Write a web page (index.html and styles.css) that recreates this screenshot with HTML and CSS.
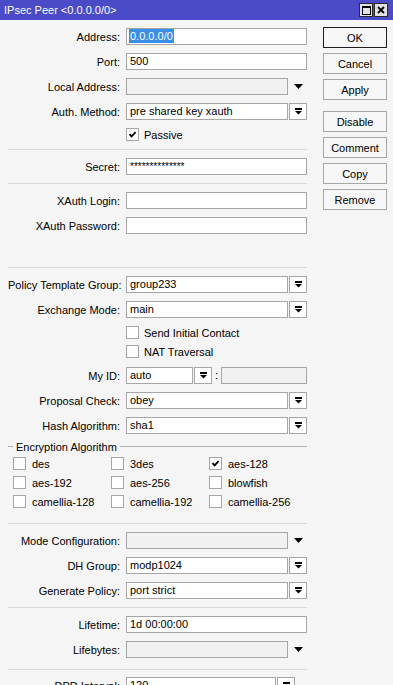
FILE: index.html
```html
<html>
<head>
<title>IPsec Peer</title>
<link rel="stylesheet" href="styles.css">
</head>
<body>
<div class="titlebar">
	<span class="title">IPsec Peer &lt;0.0.0.0/0&gt;</span>
	<div class="tb-buttons">
		<span class="tb-btn"><svg width="9" height="9" viewBox="0 0 9 9"><rect x="0.5" y="0.5" width="8" height="8" fill="none" stroke="#000"/><rect x="0" y="0" width="9" height="2"/></svg></span>
		<span class="tb-btn"><svg width="8" height="8" viewBox="0 0 8 8"><path d="M1 1L7 7M7 1L1 7" stroke="#000" stroke-width="1.8"/></svg></span>
	</div>
</div>
<div class="main">
	<div class="form">
		<div class="row"><span class="lbl">Address:</span><div class="field"><span class="input"><span class="sel">0.0.0.0/0</span></span></div></div>
		<div class="row"><span class="lbl">Port:</span><div class="field"><span class="input">500</span></div></div>
		<div class="row"><span class="lbl">Local Address:</span><div class="field"><span class="input off"></span><span class="arrow"><svg width="9" height="5" viewBox="0 0 9 5"><path d="M0 0H9L4.5 5Z"/></svg></span></div></div>
		<div class="row"><span class="lbl">Auth. Method:</span><div class="field"><span class="input">pre shared key xauth</span><span class="drop"><svg width="7" height="7" viewBox="0 0 7 7"><rect width="7" height="2"/><path d="M0 3H7L3.5 6.5Z"/></svg></span></div></div>
		<div class="row check first"><span class="box"><svg width="9" height="9" viewBox="0 0 9 9"><path d="M1.5 4.2L3.6 6.4L7.6 2.2" fill="none" stroke="#000" stroke-width="1.9"/></svg></span><span class="text">Passive</span></div>
		<div class="sep"></div>
		<div class="row"><span class="lbl">Secret:</span><div class="field"><span class="input secret">**************</span></div></div>
		<div class="sep"></div>
		<div class="row"><span class="lbl">XAuth Login:</span><div class="field"><span class="input"></span></div></div>
		<div class="row"><span class="lbl">XAuth Password:</span><div class="field"><span class="input"></span></div></div>
		<div class="row"></div>
		<div class="sep"></div>
		<div class="row"><span class="lbl">Policy Template Group:</span><div class="field"><span class="input">group233</span><span class="drop"><svg width="7" height="7" viewBox="0 0 7 7"><rect width="7" height="2"/><path d="M0 3H7L3.5 6.5Z"/></svg></span></div></div>
		<div class="row"><span class="lbl">Exchange Mode:</span><div class="field"><span class="input">main</span><span class="drop"><svg width="7" height="7" viewBox="0 0 7 7"><rect width="7" height="2"/><path d="M0 3H7L3.5 6.5Z"/></svg></span></div></div>
		<div class="row check first"><span class="box"></span><span class="text">Send Initial Contact</span></div>
		<div class="row check"><span class="box"></span><span class="text">NAT Traversal</span></div>
		<div class="row after-check"><span class="lbl">My ID:</span><div class="field"><span class="input myid">auto</span><span class="drop"><svg width="7" height="7" viewBox="0 0 7 7"><rect width="7" height="2"/><path d="M0 3H7L3.5 6.5Z"/></svg></span><span class="colon">:</span><span class="input off"></span></div></div>
		<div class="row"><span class="lbl">Proposal Check:</span><div class="field"><span class="input">obey</span><span class="drop"><svg width="7" height="7" viewBox="0 0 7 7"><rect width="7" height="2"/><path d="M0 3H7L3.5 6.5Z"/></svg></span></div></div>
		<div class="row"><span class="lbl">Hash Algorithm:</span><div class="field"><span class="input">sha1</span><span class="drop"><svg width="7" height="7" viewBox="0 0 7 7"><rect width="7" height="2"/><path d="M0 3H7L3.5 6.5Z"/></svg></span></div></div>
		<div class="group">Encryption Algorithm</div>
		<div class="grid">
			<div class="opt"><span class="box"></span>des</div>
			<div class="opt"><span class="box"></span>3des</div>
			<div class="opt"><span class="box"><svg width="9" height="9" viewBox="0 0 9 9"><path d="M1.5 4.2L3.6 6.4L7.6 2.2" fill="none" stroke="#000" stroke-width="1.9"/></svg></span>aes-128</div>
			<div class="opt"><span class="box"></span>aes-192</div>
			<div class="opt"><span class="box"></span>aes-256</div>
			<div class="opt"><span class="box"></span>blowfish</div>
			<div class="opt"><span class="box"></span>camellia-128</div>
			<div class="opt"><span class="box"></span>camellia-192</div>
			<div class="opt"><span class="box"></span>camellia-256</div>
		</div>
		<div class="sep after-grid"></div>
		<div class="row"><span class="lbl">Mode Configuration:</span><div class="field"><span class="input off"></span><span class="arrow"><svg width="9" height="5" viewBox="0 0 9 5"><path d="M0 0H9L4.5 5Z"/></svg></span></div></div>
		<div class="row"><span class="lbl">DH Group:</span><div class="field"><span class="input">modp1024</span><span class="drop"><svg width="7" height="7" viewBox="0 0 7 7"><rect width="7" height="2"/><path d="M0 3H7L3.5 6.5Z"/></svg></span></div></div>
		<div class="row"><span class="lbl">Generate Policy:</span><div class="field"><span class="input">port strict</span><span class="drop"><svg width="7" height="7" viewBox="0 0 7 7"><rect width="7" height="2"/><path d="M0 3H7L3.5 6.5Z"/></svg></span></div></div>
		<div class="sep"></div>
		<div class="row"><span class="lbl">Lifetime:</span><div class="field"><span class="input">1d 00:00:00</span></div></div>
		<div class="row"><span class="lbl">Lifebytes:</span><div class="field"><span class="input off"></span><span class="arrow"><svg width="9" height="5" viewBox="0 0 9 5"><path d="M0 0H9L4.5 5Z"/></svg></span></div></div>
		<div class="sep last"></div>
		<div class="row"><span class="lbl">DPD Interval:</span><div class="field short"><span class="input">120</span><span class="drop"><svg width="7" height="7" viewBox="0 0 7 7"><rect width="7" height="2"/><path d="M0 3H7L3.5 6.5Z"/></svg></span></div></div>
	</div>
	<div class="actions">
		<div class="btn default">OK</div>
		<div class="btn">Cancel</div>
		<div class="btn">Apply</div>
		<div class="btn gap">Disable</div>
		<div class="btn">Comment</div>
		<div class="btn">Copy</div>
		<div class="btn">Remove</div>
	</div>
</div>
</body>
</html>
```

FILE: styles.css
```css
html, body{
	margin:0;
	height:100%;
	overflow:hidden;
}
body{
	background:#f5f5f5;
	font-family:"Liberation Sans", Arial, sans-serif;
	font-size:11px;
	color:#000;
}
.titlebar{
	height:20px;
	background:#4b4bc8;
	color:#fff;
	display:flex;
	align-items:center;
	justify-content:space-between;
	padding:0 5px 0 4px;
}
.tb-buttons{
	display:flex;
	gap:1px;
}
.tb-btn{
	width:14px;
	height:14px;
	box-sizing:border-box;
	border:1px solid #2a2a2a;
	background:#e2e2e2;
	display:flex;
	align-items:center;
	justify-content:center;
}
.main{
	display:flex;
	padding-left:8px;
}
.form{
	width:299px;
	padding-top:8px;
	display:flex;
	flex-direction:column;
}
.actions{
	width:64px;
	margin-left:16px;
	padding-top:7px;
	display:flex;
	flex-direction:column;
	gap:5px;
}
.btn{
	height:21px;
	box-sizing:border-box;
	border:1px solid #a6a6a6;
	background:#f7f7f7;
	display:flex;
	align-items:center;
	justify-content:center;
}
.btn.default{
	border-color:#1e1e1e;
}
.btn.gap{
	margin-top:6px;
}
.row{
	display:flex;
	align-items:center;
	height:17px;
	margin-bottom:8px;
}
.lbl{
	width:112px;
	margin-right:6px;
	text-align:right;
	white-space:nowrap;
}
.field{
	width:181px;
	height:17px;
	display:flex;
}
.field.short{
	width:169px;
}
.input{
	flex:1;
	box-sizing:border-box;
	border:1px solid #a6a6a6;
	background:#fff;
	padding:0 3px;
	line-height:15px;
	white-space:nowrap;
	overflow:hidden;
}
.input.off{
	background:#f1f1f1;
}
.input.myid{
	flex:none;
	width:67px;
}
.input.secret{
	font-size:10px;
}
.sel{
	display:inline-block;
	background:#3a8ee6;
	color:#fff;
	margin-left:-1px;
	padding:0 1px;
	line-height:14px;
}
.drop{
	width:18px;
	margin-left:1px;
	box-sizing:border-box;
	border:1px solid #a6a6a6;
	background:#fff;
	display:flex;
	align-items:center;
	justify-content:center;
}
.arrow{
	width:18px;
	margin-left:1px;
	display:flex;
	align-items:center;
	justify-content:center;
}
.colon{
	margin:0 3px;
	line-height:17px;
}
.box{
	width:13px;
	height:13px;
	box-sizing:border-box;
	border:1px solid #a6a6a6;
	background:#fff;
	display:flex;
	align-items:center;
	justify-content:center;
	flex:none;
}
.row.check{
	height:15px;
	margin:-1px 0 5px;
	padding-left:118px;
}
.row.check.first{
	margin-top:-1px;
}
.row.check .text{
	margin-left:5px;
}
.row.after-check{
	margin-top:3px;
}
.check + .sep{
	margin-top:2px;
}
.sep{
	height:1px;
	background:#d9d9d9;
	margin-bottom:8px;
}
.sep.after-grid{
	margin-top:14px;
}
.sep.last{
	margin-top:3px;
	margin-bottom:7px;
}
.group{
	display:flex;
	align-items:center;
	height:13px;
	margin:-2px 0 3px;
}
.group::before{
	content:"";
	width:5px;
	border-top:1px solid #b0b0b0;
	margin-right:3px;
}
.group::after{
	content:"";
	flex:1;
	border-top:1px solid #b0b0b0;
	margin-left:3px;
}
.grid{
	display:grid;
	grid-template-columns:98px 98px 98px;
	row-gap:4px;
	padding-left:5px;
}
.opt{
	display:flex;
	align-items:center;
	gap:6px;
	height:15px;
}
```
